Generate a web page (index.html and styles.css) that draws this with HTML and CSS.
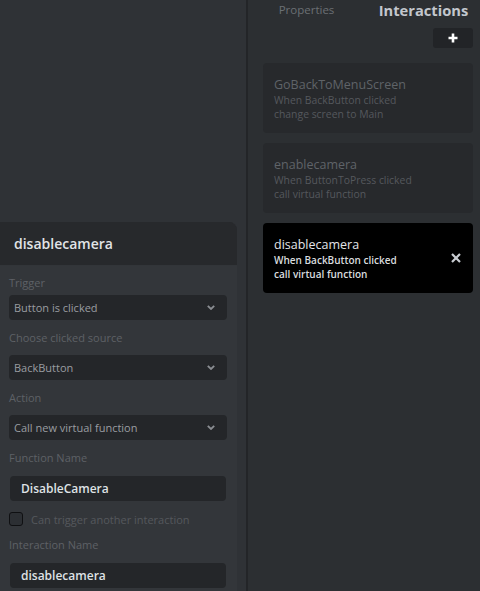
FILE: index.html
```html
<!DOCTYPE html>
<html>
<head>
<meta charset="utf-8">
<link rel="stylesheet" href="styles.css">
</head>
<body>
<div class="left">
  <div class="left-spacer"></div>
  <div class="panel">
    <div class="panel-header">disablecamera</div>
    <div class="panel-body">
      <div class="label label-first">Trigger</div>
      <div class="select"><span>Button is clicked</span><svg class="chev" viewBox="0 0 8 5" width="8" height="5"><path d="M0.8 0.8 L4 4 L7.2 0.8" fill="none" stroke="#8a8d92" stroke-width="1.8"/></svg></div>
      <div class="label">Choose clicked source</div>
      <div class="select"><span>BackButton</span><svg class="chev" viewBox="0 0 8 5" width="8" height="5"><path d="M0.8 0.8 L4 4 L7.2 0.8" fill="none" stroke="#8a8d92" stroke-width="1.8"/></svg></div>
      <div class="label">Action</div>
      <div class="select"><span>Call new virtual function</span><svg class="chev" viewBox="0 0 8 5" width="8" height="5"><path d="M0.8 0.8 L4 4 L7.2 0.8" fill="none" stroke="#8a8d92" stroke-width="1.8"/></svg></div>
      <div class="label label-input">Function Name</div>
      <div class="input">DisableCamera</div>
      <div class="check-row"><span class="checkbox"></span><span class="check-label">Can trigger another interaction</span></div>
      <div class="label label-input label-after-check">Interaction Name</div>
      <div class="input">disablecamera</div>
    </div>
  </div>
</div>
<div class="right">
  <div class="tabs">
    <div class="tab">Properties</div>
    <div class="tab tab-active">Interactions</div>
  </div>
  <div class="add-row">
    <div class="add-btn"><svg viewBox="0 0 10 10" width="10" height="10"><path d="M5 0.5 V9.5 M0.5 5 H9.5" stroke="#ffffff" stroke-width="2.6"/></svg></div>
  </div>
  <div class="cards">
    <div class="card">
      <div class="card-title">GoBackToMenuScreen</div>
      <div class="card-sub">When BackButton clicked<br>change screen to Main</div>
    </div>
    <div class="card">
      <div class="card-title">enablecamera</div>
      <div class="card-sub">When ButtonToPress clicked<br>call virtual function</div>
    </div>
    <div class="card card-active">
      <div class="card-text">
        <div class="card-title">disablecamera</div>
        <div class="card-sub">When BackButton clicked<br>call virtual function</div>
      </div>
      <svg class="close" viewBox="0 0 10 10" width="10" height="10"><path d="M1 1 L9 9 M9 1 L1 9" stroke="#c9cdd2" stroke-width="2.2"/></svg>
    </div>
  </div>
</div>
</body>
</html>
```

FILE: styles.css
```css
html, body {
  margin: 0;
  padding: 0;
  height: 100%;
}
body {
  display: flex;
  width: 480px;
  height: 591px;
  overflow: hidden;
  background: #2f3236;
  font-family: "Open Sans", "Noto Sans", sans-serif;
}
.left {
  width: 246px;
  flex: none;
  display: flex;
  flex-direction: column;
  background: #2f3236;
  border-right: 2px solid #232528;
}
.left-spacer {
  height: 222px;
  flex: none;
}
.panel {
  width: 237px;
  flex: 1;
  display: flex;
  flex-direction: column;
  background: #33363a;
  border-top-right-radius: 8px;
  overflow: hidden;
}
.panel-header {
  height: 43px;
  flex: none;
  background: #27292c;
  color: #e1e4e7;
  font-size: 14px;
  font-weight: 600;
  line-height: 43px;
  padding-left: 14px;
  box-shadow: 0 -1px 2px rgba(0,0,0,0.25);
}
.panel-body {
  display: flex;
  flex-direction: column;
  padding: 0 0 0 9px;
  width: 218px;
}
.label {
  font-size: 11px;
  line-height: 14px;
  color: #5e6166;
  margin-top: 11px;
  margin-bottom: 10px;
}
.label-first {
  margin-bottom: 5px;
}
.label-input {
  margin-bottom: 11px;
}
.label-after-check {
  margin-top: 12px;
}
.select {
  height: 25px;
  background: #242629;
  border-radius: 4px;
  display: flex;
  align-items: center;
  justify-content: space-between;
  padding: 0 12px 0 5px;
  font-size: 11px;
  color: #9a9da1;
}
.chev {
  display: block;
}
.input {
  height: 25px;
  margin-left: 1px;
  width: 205px;
  background: #242629;
  border-radius: 4px;
  padding-left: 11px;
  font-size: 12px;
  font-weight: 600;
  line-height: 25px;
  color: #dfe2e5;
}
.check-row {
  display: flex;
  align-items: center;
  margin-top: 11px;
  height: 14px;
}
.checkbox {
  width: 12px;
  height: 12px;
  border: 1px solid #0f1012;
  border-radius: 3px;
  background: #2c2f33;
}
.check-label {
  font-size: 11px;
  color: #55585d;
  margin-left: 8px;
}
.right {
  flex: 1;
  background: #2c2f32;
  display: flex;
  flex-direction: column;
}
.tabs {
  display: flex;
  height: 20px;
}
.tab {
  flex: 1;
  text-align: center;
  font-size: 11.5px;
  line-height: 20px;
  color: #6b6f74;
  padding-left: 2px;
}
.tab-active {
  font-size: 14.7px;
  font-weight: 700;
  color: #c3c7cd;
  padding-left: 4px;
}
.add-row {
  display: flex;
  justify-content: flex-end;
  padding-right: 7px;
  margin-top: 8px;
}
.add-btn {
  width: 40px;
  height: 20px;
  background: #222427;
  border-radius: 3px;
  display: flex;
  align-items: center;
  justify-content: center;
}
.add-btn svg {
  display: block;
}
.cards {
  display: flex;
  flex-direction: column;
  gap: 10px;
  padding: 15px 7px 0 15px;
}
.card {
  height: 70px;
  box-sizing: border-box;
  background: #27292c;
  border-radius: 4px;
  padding: 13px 11px 0 11px;
}
.card-title {
  font-size: 12.5px;
  line-height: 17px;
  color: #5f6368;
}
.card-sub {
  font-size: 10.4px;
  line-height: 14px;
  color: #55585d;
}
.card-active {
  background: #000000;
  display: flex;
  align-items: center;
  justify-content: space-between;
  padding: 0 12px 0 11px;
}
.card-active .card-title {
  color: #e3e5e8;
}
.card-active .card-sub {
  font-size: 10px;
  color: #d9dcdf;
  font-weight: 600;
}
.close {
  display: block;
}
```
